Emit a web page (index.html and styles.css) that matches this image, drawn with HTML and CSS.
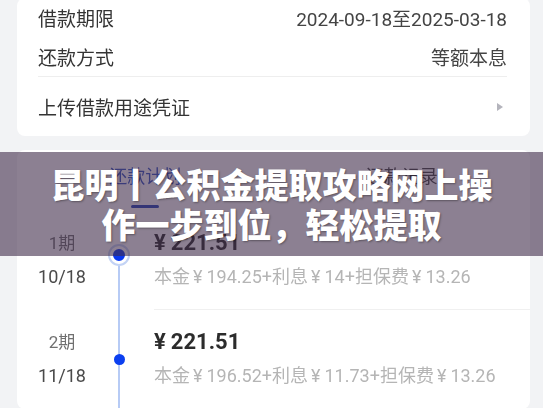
FILE: index.html
```html
<!DOCTYPE html>
<html lang="zh-CN">
<head>
  <meta charset="UTF-8" />
  <meta name="viewport" content="width=device-width, initial-scale=1.0"/>
  <title>昆明丨公积金提取攻略</title>
  <link rel="stylesheet" href="styles.css">
</head>
<body>

  <div class="app">
    <section class="card info">
      <div class="row"><span class="label">借款期限</span><span class="value">2024-09-18至2025-03-18</span></div>
      <div class="row"><span class="label">还款方式</span><span class="value">等额本息</span></div>
      <div class="row link"><span class="label">上传借款用途凭证</span><span class="arrow"></span></div>
    </section>

    <section class="card plan">
      <div class="tabs">
        <div class="tab active">还款计划</div>
        <div class="tab">还款记录</div>
      </div>

      <div class="term first">
        <div class="when"><span class="no">1期</span><span class="date">10/18</span></div>
        <div class="rail"><span class="dot big"></span></div>
        <div class="money">
          <span class="amount"><span class="yen">¥</span>221.51</span>
          <span class="detail">本金<span class="yen">¥</span>194.25+利息<span class="yen">¥</span>14+担保费<span class="yen">¥</span>13.26</span>
        </div>
      </div>

      <div class="term">
        <div class="when"><span class="no">2期</span><span class="date">11/18</span></div>
        <div class="rail"><span class="dot"></span></div>
        <div class="money">
          <span class="amount"><span class="yen">¥</span>221.51</span>
          <span class="detail">本金<span class="yen">¥</span>196.52+利息<span class="yen">¥</span>11.73+担保费<span class="yen">¥</span>13.26</span>
        </div>
      </div>
    </section>
  </div>

  <div class="banner">
    <h1>昆明丨公积金提取攻略网上操作一步到位，轻松提取</h1>
  </div>

</body>
</html>
```

FILE: styles.css
```css
body { margin:0; background:#f2f3f5; font-family:Roboto, "Noto Sans CJK SC", sans-serif; overflow:hidden; }
.app { display:flex; flex-direction:column; gap:14px; filter:blur(0.4px); }
.card { background:#fff; margin:0 13px 0 17px; border-radius:8px; }

/* loan info */
.info { margin-top:-2px; padding:0 23px 0 21px; }
.row { display:flex; align-items:center; justify-content:space-between; height:39px; font-size:19px; }
.row .label { color:#343434; }
.row .value { color:#444; }
.row.link { height:59px; border-top:1px solid #eeeeee; }
.arrow { width:0; height:0; border-left:6px solid #b4b4bc; border-top:4px solid transparent; border-bottom:4px solid transparent; margin-right:4px; }

/* repayment plan */
.tabs { display:grid; grid-template-columns:1fr 1fr; height:61px; }
.tab { position:relative; text-align:center; font-size:18px; line-height:26px; padding-top:14px; color:#444; }
.tab.active { color:#3556c4; }
.tab.active::after { content:""; position:absolute; left:50%; bottom:3px; width:28px; height:3px; margin-left:-14px; background:#2444b8; border-radius:2px; }

.term { display:grid; grid-template-columns:90px 24px 1fr; }
.when { display:flex; flex-direction:column; align-items:center; padding-top:15px; line-height:34px; }
.when .no { font-size:17px; color:#707070; }
.when .date { font-size:18px; color:#4a4a4a; }
.rail { display:flex; align-items:center; justify-content:center; background:linear-gradient(#b7cbf5,#b7cbf5) center / 2px 100% no-repeat; }
.first .rail { background-position:center bottom; background-size:2px 52%; align-items:flex-start; padding-top:35px; }
.dot { width:11px; height:11px; border-radius:50%; background:#0b3ff0; }
.dot.big { width:12px; height:12px; border:3px solid #fff; box-shadow:0 0 0 2px #c3d3f5; background:#0a38f0; }
.money { display:flex; flex-direction:column; margin-left:23px; padding:15px 0; line-height:34px; border-bottom:1px solid #f0f0f0; }
.amount { font-size:22px; font-weight:700; color:#2c2c2c; }
.detail { font-size:18px; color:#b5b5b5; }
.yen { margin:0 4px 0 3px; }
.amount .yen { margin:0 5px 0 0; }

/* title overlay */
.banner { position:absolute; left:0; right:0; top:152px; height:104px; display:flex; align-items:center; justify-content:center; background:rgba(64,44,74,0.6); }
.banner h1 { margin:0; width:460px; text-align:center; font-size:34px; line-height:40px; font-weight:900; color:#fff; font-family:"Noto Sans CJK SC", sans-serif; text-shadow:1px 1px 2px rgba(0,0,0,0.35); }
```
